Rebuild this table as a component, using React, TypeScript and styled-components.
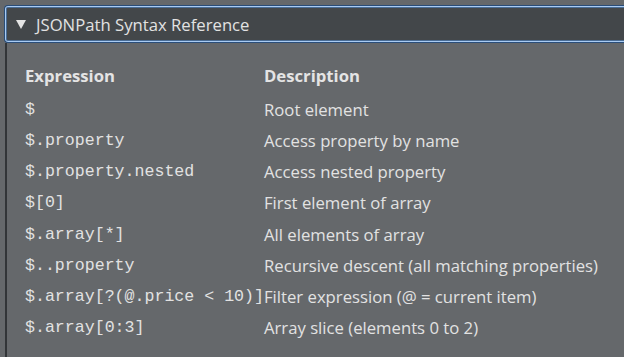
import React from "react";
import styled, { createGlobalStyle } from "styled-components";

const Global = createGlobalStyle`
  html, body { margin: 0; padding: 0; background: #65686b; overflow: hidden; }
  body { width: 624px; height: 357px; font-family: "Open Sans", "Noto Sans", sans-serif; }
  #root { height: 100%; }
`;

const Details = styled.div`
  box-sizing: border-box;
  height: 100%;
  padding: 5px 0 0 4px;
  display: flex;
  flex-direction: column;
`;

const Summary = styled.div`
  flex: none;
  display: flex;
  align-items: center;
  gap: 10px;
  height: 36px;
  padding: 0 0 0 11px;
  background: #43474a;
  border: 1px solid #2a4d78;
  border-right: none;
  border-radius: 4px 0 0 4px;
  box-shadow:
    inset 1px 0 0 #a9cbf2, inset 0 1px 0 #a9cbf2, inset 0 -1px 0 #a9cbf2,
    inset 2px 0 0 #4a6d96, inset 0 2px 0 #4a6d96, inset 0 -2px 0 #4a6d96;
  color: #e2e2e2;
  font-size: 16.7px;
`;

const Caret = styled.svg`
  width: 10px;
  height: 9px;
  flex: none;
`;

const Body = styled.div`
  flex: 1;
  min-height: 0;
  border-left: 2px solid #323538;
  margin-left: 1px;
  padding: 13px 0 0 18px;
`;

const Table = styled.div`
  display: grid;
  grid-template-columns: max-content 1fr;
  grid-template-rows: 38px;
  grid-auto-rows: 31.15px;
  align-items: center;
  color: #e0e0e0;
`;

const Head = styled.div`
  font-weight: 700;
  font-size: 16.7px;
  color: #e4e4e4;
`;

const Expr = styled.div`
  font-family: "Liberation Mono", "DejaVu Sans Mono", monospace;
  font-size: 16.6px;
  color: #e2e2e2;
`;

const Desc = styled.div`
  font-size: 16.7px;
  color: #e2e2e2;
`;

const rows: [string, string][] = [
  ["$", "Root element"],
  ["$.property", "Access property by name"],
  ["$.property.nested", "Access nested property"],
  ["$[0]", "First element of array"],
  ["$.array[*]", "All elements of array"],
  ["$..property", "Recursive descent (all matching properties)"],
  ["$.array[?(@.price < 10)]", "Filter expression (@ = current item)"],
  ["$.array[0:3]", "Array slice (elements 0 to 2)"],
];

export default function App() {
  return (
    <>
      <Global />
      <Details>
        <Summary>
          <Caret viewBox="0 0 10 9">
            <path d="M0 0H10L5 9Z" fill="#e4e4e4" />
          </Caret>
          <span>JSONPath Syntax Reference</span>
        </Summary>
        <Body>
          <Table>
            <Head>Expression</Head>
            <Head>Description</Head>
            {rows.map(([e, d]) => (
              <React.Fragment key={e}>
                <Expr>{e}</Expr>
                <Desc>{d}</Desc>
              </React.Fragment>
            ))}
          </Table>
        </Body>
      </Details>
    </>
  );
}
